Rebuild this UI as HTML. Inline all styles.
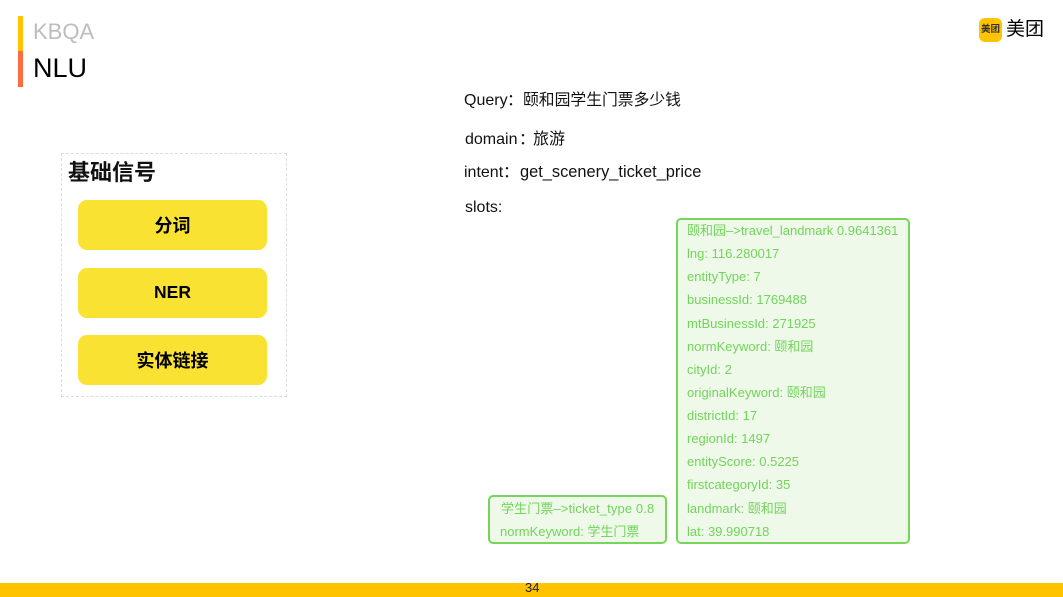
<!DOCTYPE html>
<html><head><meta charset="utf-8"><style>
html,body{margin:0;padding:0;background:#fff}
#p{position:relative;width:1063px;height:597px;overflow:hidden;background:#fff;font-family:"Liberation Sans","Noto Sans CJK SC",sans-serif}
#p div{position:absolute;white-space:nowrap}
.t{font-size:16px;color:#111;line-height:20px}
.btn{left:78px;width:189px;height:50px;background:#fae232;border-radius:9px;text-align:center;line-height:52px;font-size:18px;font-weight:bold;color:#000}
.box{background:#eef9e9;border:2px solid #78d55c;border-radius:5px;box-sizing:border-box}
.g{font-size:13px;color:#72d45a;line-height:20px}
</style></head><body><div id="p">
<div style="left:18px;top:16px;width:5px;height:35px;background:#ffc300"></div>
<div style="left:18px;top:51px;width:5px;height:36px;background:#ff6b40"></div>
<div style="left:33px;top:16px;font-size:22px;line-height:32px;color:#bdbdbd">KBQA</div>
<div style="left:33px;top:50px;font-size:27px;line-height:36px;color:#000">NLU</div>

<div style="left:979px;top:18px;width:23px;height:24px;background:#ffc300;border-radius:6px;font-size:9.5px;line-height:24px;text-align:center;color:#333;font-weight:bold">美团</div>
<div style="left:1006px;top:18px;font-size:19px;line-height:24px;color:#000">美团</div>

<div style="left:61px;top:153px;width:224px;height:242px;border:1px dashed #dddddd"></div>
<div style="left:68px;top:159px;font-size:22px;line-height:28px;font-weight:bold;color:#111">基础信号</div>
<div class="btn" style="top:200px">分词</div>
<div class="btn" style="top:268px;font-size:17.5px;line-height:48px">NER</div>
<div class="btn" style="top:335px;line-height:53px">实体链接</div>

<div class="t" style="left:464px;top:91px">Query</div>
<div class="t" style="left:507px;top:91px">：</div>
<div class="t" style="left:523px;top:91px;font-size:15.8px">颐和园学生门票多少钱</div>
<div class="t" style="left:465px;top:130px">domain</div>
<div class="t" style="left:519px;top:130px">：</div>
<div class="t" style="left:533px;top:130px">旅游</div>
<div class="t" style="left:464px;top:163px">intent</div>
<div class="t" style="left:503px;top:163px">：</div>
<div class="t" style="left:520px;top:162px;font-size:16.4px">get_scenery_ticket_price</div>
<div class="t" style="left:465px;top:198px">slots:</div>

<div class="box" style="left:488px;top:495px;width:179px;height:49px"></div>
<div class="g" style="left:501px;top:499px;letter-spacing:.13px">学生门票–&gt;ticket_type 0.8</div>
<div class="g" style="left:500px;top:522px">normKeyword: 学生门票</div>

<div class="box" style="left:676px;top:218px;width:234px;height:326px"></div>
<div class="g" style="left:687px;top:221px">颐和园–&gt;travel_landmark 0.9641361</div>
<div class="g" style="left:687px;top:244px">lng: 116.280017</div>
<div class="g" style="left:687px;top:267px">entityType: 7</div>
<div class="g" style="left:687px;top:290px">businessId: 1769488</div>
<div class="g" style="left:687px;top:314px">mtBusinessId: 271925</div>
<div class="g" style="left:687px;top:337px">normKeyword: 颐和园</div>
<div class="g" style="left:687px;top:360px">cityId: 2</div>
<div class="g" style="left:687px;top:383px">originalKeyword: 颐和园</div>
<div class="g" style="left:687px;top:406px">districtId: 17</div>
<div class="g" style="left:687px;top:429px">regionId: 1497</div>
<div class="g" style="left:687px;top:452px">entityScore: 0.5225</div>
<div class="g" style="left:687px;top:475px">firstcategoryId: 35</div>
<div class="g" style="left:687px;top:499px">landmark: 颐和园</div>
<div class="g" style="left:687px;top:522px">lat: 39.990718</div>

<div style="left:0;top:583px;width:1063px;height:14px;background:#ffc300"></div>
<div style="left:525px;top:580px;font-size:13px;line-height:16px;color:#222">34</div>
</div></body></html>
